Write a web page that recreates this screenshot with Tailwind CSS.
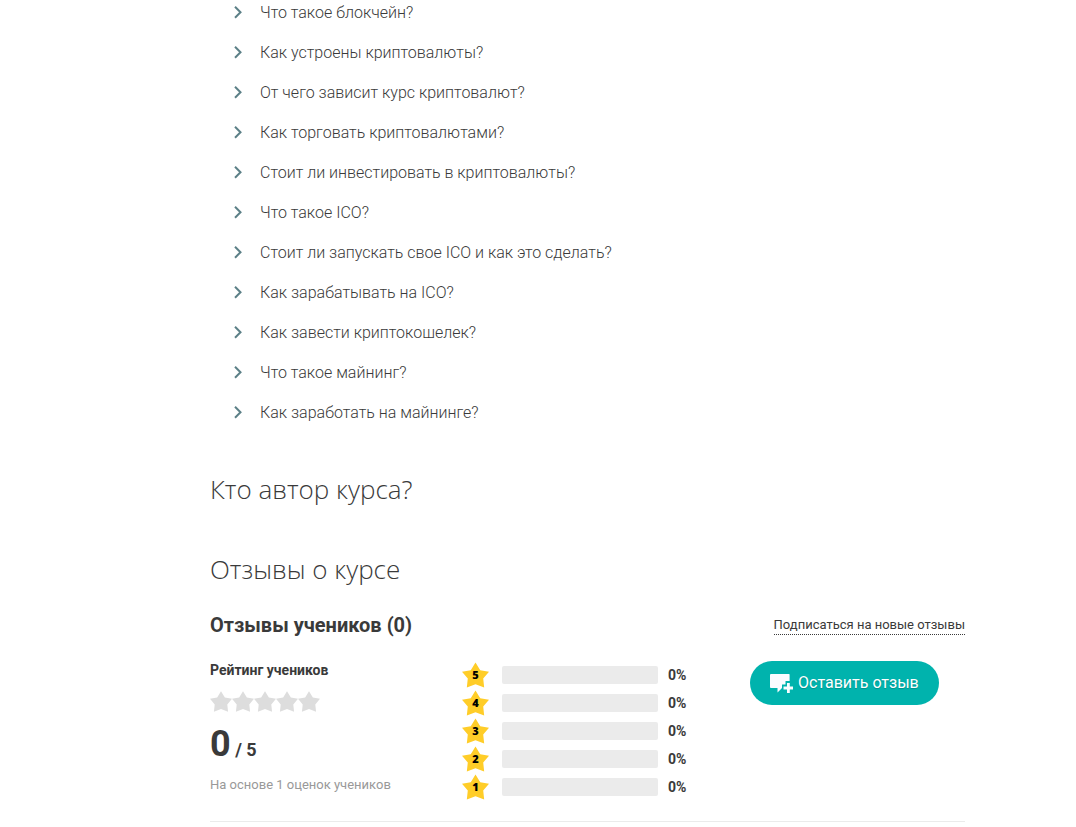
<!DOCTYPE html>
<html lang="ru">

<head>
    <meta charset="UTF-8">
    <meta name="viewport" content="width=device-width, initial-scale=1.0">
    <title>Курс о криптовалютах</title>
    <script src="https://cdn.jsdelivr.net/npm/@tailwindcss/browser@4"></script>
</head>

<body class="overflow-x-hidden bg-white font-['Roboto',sans-serif] text-[#3a3a3a]">
    <!-- Общие иконки -->
    <svg class="hidden" aria-hidden="true">
        <symbol id="chevron" viewBox="0 0 9 14">
            <path d="M1 .7l5.500 5.500L1 11.700" fill="none" stroke="currentColor" stroke-width="2" />
        </symbol>
        <symbol id="star" viewBox="0 0 28 26">
            <path d="M14 0l4.900 8 9.100 1.500-6 7.200L23 26l-9-3.400L5 26l1-9.300L0 9.500 9.100 8z" fill="currentColor" />
        </symbol>
    </svg>

    <main class="mr-[111px] ml-[210px]">
        <!-- Программа курса -->
        <ul class="-mt-[7px] pl-6 text-base font-light">
            <li class="flex h-10 items-center gap-[17px]"><svg class="h-3.5 w-[9px] text-[#5c8087]"><use href="#chevron" /></svg>Что такое блокчейн?</li>
            <li class="flex h-10 items-center gap-[17px]"><svg class="h-3.5 w-[9px] text-[#5c8087]"><use href="#chevron" /></svg>Как устроены криптовалюты?</li>
            <li class="flex h-10 items-center gap-[17px]"><svg class="h-3.5 w-[9px] text-[#5c8087]"><use href="#chevron" /></svg>От чего зависит курс криптовалют?</li>
            <li class="flex h-10 items-center gap-[17px]"><svg class="h-3.5 w-[9px] text-[#5c8087]"><use href="#chevron" /></svg>Как торговать криптовалютами?</li>
            <li class="flex h-10 items-center gap-[17px]"><svg class="h-3.5 w-[9px] text-[#5c8087]"><use href="#chevron" /></svg>Стоит ли инвестировать в криптовалюты?</li>
            <li class="flex h-10 items-center gap-[17px]"><svg class="h-3.5 w-[9px] text-[#5c8087]"><use href="#chevron" /></svg>Что такое ICO?</li>
            <li class="flex h-10 items-center gap-[17px]"><svg class="h-3.5 w-[9px] text-[#5c8087]"><use href="#chevron" /></svg>Стоит ли запускать свое ICO и как это сделать?</li>
            <li class="flex h-10 items-center gap-[17px]"><svg class="h-3.5 w-[9px] text-[#5c8087]"><use href="#chevron" /></svg>Как зарабатывать на ICO?</li>
            <li class="flex h-10 items-center gap-[17px]"><svg class="h-3.5 w-[9px] text-[#5c8087]"><use href="#chevron" /></svg>Как завести криптокошелек?</li>
            <li class="flex h-10 items-center gap-[17px]"><svg class="h-3.5 w-[9px] text-[#5c8087]"><use href="#chevron" /></svg>Что такое майнинг?</li>
            <li class="flex h-10 items-center gap-[17px]"><svg class="h-3.5 w-[9px] text-[#5c8087]"><use href="#chevron" /></svg>Как заработать на майнинге?</li>
        </ul>

        <h2 class="mt-9 font-['Open_Sans',sans-serif] text-[26px] leading-10 font-light">Кто автор курса?</h2>
        <h2 class="mt-10 font-['Open_Sans',sans-serif] text-[26px] leading-10 font-light">Отзывы о курсе</h2>

        <!-- Отзывы -->
        <section class="border-b border-[#ebebeb] pb-5">
            <div class="mt-5 flex items-center justify-between">
                <h3 class="text-xl leading-8 font-bold">Отзывы учеников (0)</h3>
                <a href="#" class="border-b border-dotted border-[#3a3a3a] text-[13px] leading-[18px]">Подписаться на новые отзывы</a>
            </div>

            <div class="mt-5 flex items-start">
                <div class="w-[252px]">
                    <h4 class="text-sm leading-[18px] font-bold">Рейтинг учеников</h4>
                    <div class="mt-3 flex text-[#dddddd]" role="img" aria-label="0 из 5">
                        <svg class="h-[21px] w-[22px]"><use href="#star" /></svg>
                        <svg class="h-[21px] w-[22px]"><use href="#star" /></svg>
                        <svg class="h-[21px] w-[22px]"><use href="#star" /></svg>
                        <svg class="h-[21px] w-[22px]"><use href="#star" /></svg>
                        <svg class="h-[21px] w-[22px]"><use href="#star" /></svg>
                    </div>
                    <p class="mt-2.5 text-lg leading-[44px] font-bold"><span class="text-4xl leading-[44px]">0</span> / 5</p>
                    <p class="mt-1 text-[13px] leading-[18px] text-[#999999]">На основе 1 оценок учеников</p>
                </div>

                <div class="w-[288px] text-sm font-bold">
                    <div class="flex h-7 items-center">
                        <span class="relative h-[26px] w-[27px] text-[#ffcd28]"><svg class="size-full"><use href="#star" /></svg><b class="absolute inset-0 text-center font-['Open_Sans',sans-serif] text-[11px] leading-[26px] text-black">5</b></span>
                        <span class="mr-2.5 ml-[13px] h-[18px] w-[156px] rounded-xs bg-[#ebebeb]"></span>0%
                    </div>
                    <div class="flex h-7 items-center">
                        <span class="relative h-[26px] w-[27px] text-[#ffcd28]"><svg class="size-full"><use href="#star" /></svg><b class="absolute inset-0 text-center font-['Open_Sans',sans-serif] text-[11px] leading-[26px] text-black">4</b></span>
                        <span class="mr-2.5 ml-[13px] h-[18px] w-[156px] rounded-xs bg-[#ebebeb]"></span>0%
                    </div>
                    <div class="flex h-7 items-center">
                        <span class="relative h-[26px] w-[27px] text-[#ffcd28]"><svg class="size-full"><use href="#star" /></svg><b class="absolute inset-0 text-center font-['Open_Sans',sans-serif] text-[11px] leading-[26px] text-black">3</b></span>
                        <span class="mr-2.5 ml-[13px] h-[18px] w-[156px] rounded-xs bg-[#ebebeb]"></span>0%
                    </div>
                    <div class="flex h-7 items-center">
                        <span class="relative h-[26px] w-[27px] text-[#ffcd28]"><svg class="size-full"><use href="#star" /></svg><b class="absolute inset-0 text-center font-['Open_Sans',sans-serif] text-[11px] leading-[26px] text-black">2</b></span>
                        <span class="mr-2.5 ml-[13px] h-[18px] w-[156px] rounded-xs bg-[#ebebeb]"></span>0%
                    </div>
                    <div class="flex h-7 items-center">
                        <span class="relative h-[26px] w-[27px] text-[#ffcd28]"><svg class="size-full"><use href="#star" /></svg><b class="absolute inset-0 text-center font-['Open_Sans',sans-serif] text-[11px] leading-[26px] text-black">1</b></span>
                        <span class="mr-2.5 ml-[13px] h-[18px] w-[156px] rounded-xs bg-[#ebebeb]"></span>0%
                    </div>
                </div>

                <button type="button" class="flex h-11 items-center gap-1 rounded-full bg-[#00b3ad] px-5 text-base whitespace-nowrap text-white text-shadow-xs">
                    <svg class="h-5 w-6" viewBox="0 0 24 20" fill="#fafcff">
                        <path d="M1 1h18a.6.6 0 0 1 .6.6V8H15.500v3.500H12v3.500L7.500 19.500V15H.9a.9.9 0 0 1-.9-.9V2a1 1 0 0 1 1-1z" />
                        <path d="M17 10h2.800v3.600H23v2.800h-3.200V20H17v-3.600h-3.500v-2.800H17z" />
                    </svg>
                    Оставить отзыв
                </button>
            </div>
        </section>
    </main>
</body>

</html>
